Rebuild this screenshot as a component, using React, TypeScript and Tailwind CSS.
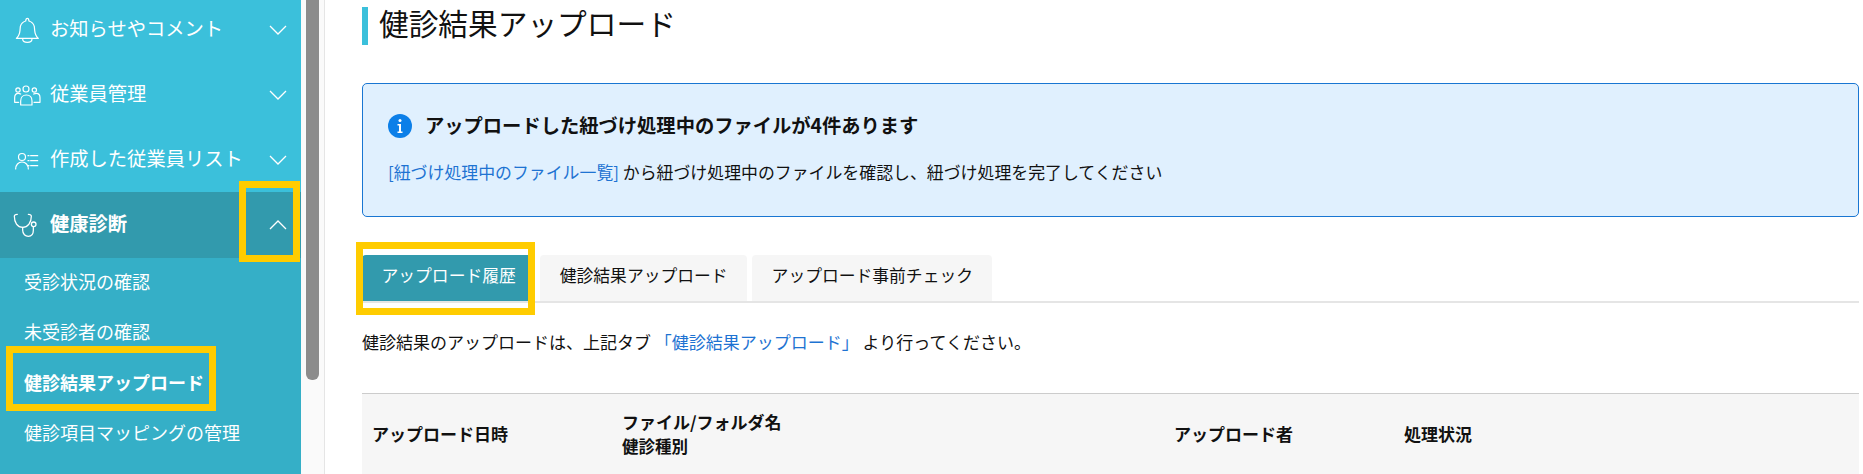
const jp = { fontFamily: '"Noto Sans CJK JP", sans-serif' };

function Chevron({ up = false }: { up?: boolean }) {
  return (
    <svg width="20" height="12" viewBox="0 0 20 12" fill="none" stroke="#fff" strokeWidth="1.3">
      <path d={up ? "M2 10 L10 2 L18 10" : "M2 2 L10 10 L18 2"} />
    </svg>
  );
}

function IconBox({ children, w = 3.6 }: { children: React.ReactNode; w?: number }) {
  return (
    <svg width="40" height="40" viewBox="0 0 120 120" fill="none" stroke="#fff" strokeWidth={w} strokeLinecap="round" strokeLinejoin="round">
      {children}
    </svg>
  );
}

function Bell() {
  return (
    <IconBox>
      <path d="M25 85c7-6 10-13 11-24l1-11c2-9 9-15 16-17l1-4a4 4 0 0 1 8 0l1 4c7 2 14 8 16 17l1 11c1 11 4 18 11 24z" />
      <path d="M44 87c0 7 6 10 14 10s14-3 14-10" />
    </IconBox>
  );
}
function People() {
  return (
    <IconBox>
      <circle cx="54" cy="42" r="9" />
      <circle cx="30" cy="45" r="6.500" />
      <circle cx="79" cy="45" r="6.500" />
      <path d="M38 90V78c0-11 7-18 17-18s17 7 17 18v12z" />
      <path d="M20 82V68c0-8 4-13 11-13 3 0 5 1 7 2M96 82V68c0-8-4-13-11-13-3 0-6 1-8 2M20 82h12M96 82H78" />
    </IconBox>
  );
}
function PersonList() {
  return (
    <IconBox>
      <circle cx="42" cy="51" r="10.500" />
      <path d="M23 87c0-12 8-21 19-21s19 9 19 21" />
      <path d="M60 47h3M68 47h21M60 62h3M68 62h21M60 77h3M68 77h21" strokeWidth={3.800} />
    </IconBox>
  );
}
function Stethoscope() {
  return (
    <IconBox w={3.800}>
      <path d="M28 28c-6 0-9 2-9 6 0 18 9 33 25 33s26-15 26-33c0-4-3-6-9-6" />
      <path d="M44 67v9c0 11 8 18 17 18s15-7 15-18v-10" />
      <circle cx="77" cy="58" r="7" />
    </IconBox>
  );
}

function NavRow({ icon, label, open = false, tall = false }: { icon: React.ReactNode; label: string; open?: boolean; tall?: boolean }) {
  return (
    <div className={`flex items-center pl-[8px] pr-[13px] ${tall ? "h-[66px] bg-[#329aad]" : "h-[65px]"}`}>
      <div className="w-[42px] shrink-0">{icon}</div>
      <span className={`flex-1 pb-[3px] text-[19.300px] text-white ${open ? "font-bold" : ""}`}>{label}</span>
      <Chevron up={open} />
    </div>
  );
}

function SubRow({ label, active = false }: { label: string; active?: boolean }) {
  return (
    <div className={`flex h-[50.500px] items-center pb-[4px] pl-[24px] text-[18px] text-white ${active ? "font-bold" : ""}`}>{label}</div>
  );
}

function Tab({ label, active = false }: { label: string; active?: boolean }) {
  return (
    <div
      className={`flex h-[46px] items-center rounded-t-[4px] px-[19.500px] pb-[4px] text-[16.800px] ${
        active ? "bg-[#329aad] text-white" : "bg-[#f6f6f6] text-[#111]"
      }`}
    >
      {label}
    </div>
  );
}

export default function App() {
  return (
    <div className="relative flex h-[474px] w-[1863px] overflow-hidden bg-white text-[#111]" style={jp}>
      <aside className="flex h-full w-[301px] shrink-0 flex-col bg-[#3bc0db]">
        <div className="-mt-[3px]">
          <NavRow icon={<Bell />} label="お知らせやコメント" />
          <NavRow icon={<People />} label="従業員管理" />
          <NavRow icon={<PersonList />} label="作成した従業員リスト" />
          <NavRow icon={<Stethoscope />} label="健康診断" open tall />
        </div>
        <div className="flex-1 bg-[#35afc7]">
          <SubRow label="受診状況の確認" />
          <SubRow label="未受診者の確認" />
          <SubRow label="健診結果アップロード" active />
          <SubRow label="健診項目マッピングの管理" />
        </div>
      </aside>

      <div className="flex h-full w-[24px] shrink-0 border-r border-[#e5e5e5] bg-[#fafafa] pl-[5px]">
        <div className="h-[380px] w-[13px] rounded-b-[6px] bg-[#8c8c8c]" />
      </div>

      <main className="min-w-0 flex-1 pl-[37px] pr-[4px] pt-[7px]">
        <div className="flex h-[38px] items-center border-l-[6px] border-[#3bc0db] pb-[6px] pl-[11px] text-[29.700px] leading-none">
          健診結果アップロード
        </div>

        <div className="mt-[38px] h-[134px] rounded-[5px] border border-[#1976d2] bg-[#e0f0fe] pl-[25px] pt-[30px]">
          <div className="flex h-[24px] items-center">
            <svg width="24" height="24" viewBox="0 0 24 24" className="shrink-0">
              <circle cx="12" cy="12" r="12" fill="#0c7fe8" />
              <rect x="10.500" y="5" width="3" height="3" rx="1.500" fill="#fff" />
              <path d="M9.500 10h3.500v7.500h1.500V19h-5v-1.500H11V11.500H9.500z" fill="#fff" />
            </svg>
            <span className="ml-[13px] pb-[2px] text-[19.300px] font-bold">アップロードした紐づけ処理中のファイルが4件あります</span>
          </div>
          <div className="mt-[21px] text-[16.900px]">
            <span className="text-[#1e73d2]">[紐づけ処理中のファイル一覧]</span> から紐づけ処理中のファイルを確認し、紐づけ処理を完了してください
          </div>
        </div>

        <div className="mt-[38px] flex gap-[5px] border-b-2 border-[#e5e5e5]">
          <Tab label="アップロード履歴" active />
          <Tab label="健診結果アップロード" />
          <Tab label="アップロード事前チェック" />
        </div>

        <div className="mt-[26px] text-[17px]">
          健診結果のアップロードは、上記タブ <span className="text-[#1e73d2]">「健診結果アップロード」</span> より行ってください。
        </div>

        <div className="mt-[38px] flex h-[90px] items-center border-t border-[#cccccc] bg-[#f6f6f6] pb-[9px] text-[17px] font-bold">
          <div className="w-[260px] pl-[10px]">アップロード日時</div>
          <div className="w-[552px] leading-[24px]">
            <div>ファイル/フォルダ名</div>
            <div className="text-[16.500px]">健診種別</div>
          </div>
          <div className="w-[230px]">アップロード者</div>
          <div>処理状況</div>
        </div>
      </main>

      <div className="absolute left-[239px] top-[181px] h-[81px] w-[61px] border-[7px] border-[#ffcc00]" />
      <div className="absolute left-[6px] top-[346px] h-[65px] w-[210px] border-[7px] border-[#ffcc00]" />
      <div className="absolute left-[356px] top-[242px] h-[73px] w-[179px] border-[7px] border-[#ffcc00]" />
    </div>
  );
}
